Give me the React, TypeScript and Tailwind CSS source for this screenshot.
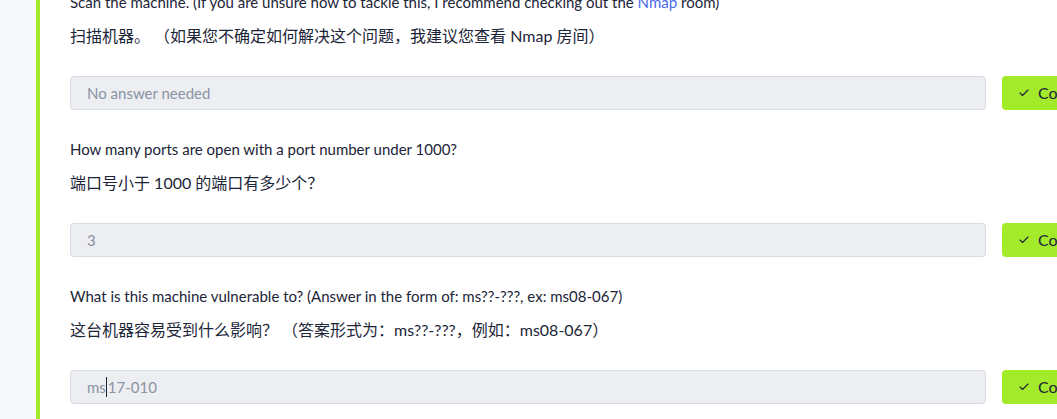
import React from "react";
import { Check } from "lucide-react";

const questions = [
  {
    id: 1,
    en: (
      <>
        Scan the machine. (If you are unsure how to tackle this, I recommend checking out the{" "}
        <span className="text-[#4b6cf0]">Nmap</span> room)
      </>
    ),
    zh: "扫描机器。 （如果您不确定如何解决这个问题，我建议您查看 Nmap 房间）",
    answer: "No answer needed",
  },
  {
    id: 2,
    en: "How many ports are open with a port number under 1000?",
    zh: "端口号小于 1000 的端口有多少个？",
    answer: "3",
  },
  {
    id: 3,
    en: "What is this machine vulnerable to? (Answer in the form of: ms??-???, ex: ms08-067)",
    zh: "这台机器容易受到什么影响？ （答案形式为：ms??-???，例如：ms08-067）",
    answer: "ms17-010",
    caret: 2,
  },
];

const font = {
  fontFamily: '"Lato", "Noto Sans CJK SC", sans-serif',
};

export default function App() {
  return (
    <div className="flex h-screen w-full overflow-hidden bg-white text-[#1c2538]" style={font}>
      {/* side strip */}
      <div className="w-9 shrink-0 bg-[#f7f8fa]" />
      <div className="w-1 shrink-0 bg-[#a3ea2a]" />

      <div className="flex min-w-0 flex-1 flex-col pl-[30px] -mt-[9px]">
        {questions.map((q) => (
          <div key={q.id} className="mb-[28px] flex flex-col">
            <p className="text-[15px] leading-[22px] whitespace-nowrap">{q.en}</p>
            <p className="mt-[11px] text-[16px] leading-[24px] whitespace-nowrap">{q.zh}</p>
            <div className="mt-[28px] flex gap-4">
              <div className="flex h-[34px] w-[916px] shrink-0 items-center rounded-[4px] border border-[#d6dae2] bg-[#eceef2] px-4 text-[15px] text-[#8a93a3]">
                {q.caret !== undefined ? (
                  <>
                    {q.answer.slice(0, q.caret)}
                    <span className="mx-[0.5px] inline-block h-[20px] w-px bg-[#1c2538]" />
                    {q.answer.slice(q.caret)}
                  </>
                ) : (
                  q.answer
                )}
              </div>
              <button className="flex h-[34px] shrink-0 items-center gap-2 whitespace-nowrap rounded-[4px] bg-[#a3ea2a] pl-4 pr-5 text-[16px] text-[#1c2538]">
                <Check size={12} strokeWidth={2.25} />
                Correct Answer
              </button>
            </div>
          </div>
        ))}
      </div>
    </div>
  );
}
